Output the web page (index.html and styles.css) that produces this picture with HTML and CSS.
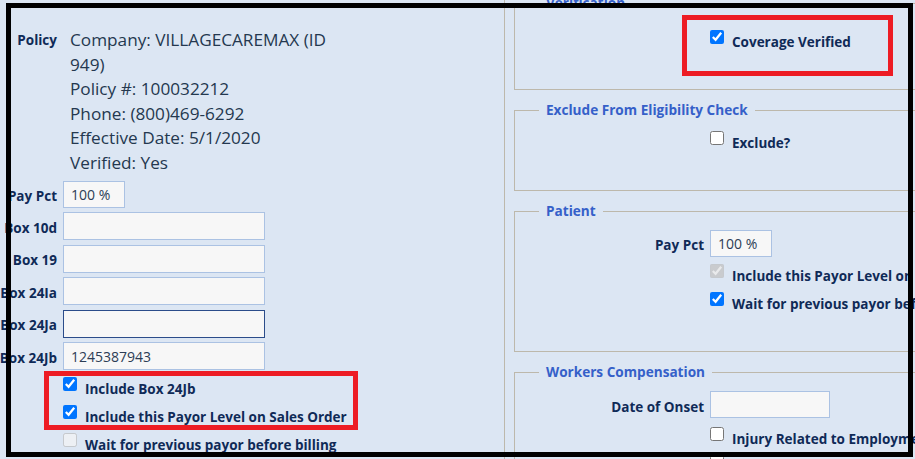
FILE: index.html
```html
<!DOCTYPE html>
<html>
<head>
<meta charset="utf-8">
<link rel="stylesheet" href="styles.css">
</head>
<body>
<div class="screen">
  <div class="left">
    <div class="form">
      <div class="lbl policy-lbl">Policy</div>
      <div class="policy">Company: VILLAGECAREMAX (ID<br>949)<br>Policy #: 100032212<br>Phone: (800)469-6292<br>Effective Date: 5/1/2020<br>Verified: Yes</div>

      <div class="lbl">Pay Pct</div>
      <input class="inp sm" type="text" value="100 %">
      <div class="lbl">Box 10d</div>
      <input class="inp" type="text" value="">
      <div class="lbl">Box 19</div>
      <input class="inp" type="text" value="">
      <div class="lbl">Box 24Ia</div>
      <input class="inp" type="text" value="">
      <div class="lbl">Box 24Ja</div>
      <input class="inp focus" type="text" value="">
      <div class="lbl">Box 24Jb</div>
      <input class="inp" type="text" value="1245387943">

      <label class="check"><input type="checkbox" checked><span>Include Box 24Jb</span></label>
      <label class="check"><input type="checkbox" checked><span>Include this Payor Level on Sales Order</span></label>
      <label class="check"><input type="checkbox" disabled><span>Wait for previous payor before billing</span></label>
    </div>
  </div>

  <div class="right">
    <fieldset class="fs first">
      <legend>Verification</legend>
      <div class="rgrid">
        <label class="check"><input type="checkbox" checked><span>Coverage Verified</span></label>
      </div>
    </fieldset>
    <fieldset class="fs">
      <legend>Exclude From Eligibility Check</legend>
      <div class="rgrid">
        <label class="check"><input type="checkbox"><span>Exclude?</span></label>
      </div>
    </fieldset>
    <fieldset class="fs">
      <legend>Patient</legend>
      <div class="rgrid">
        <div class="lbl">Pay Pct</div>
        <input class="inp sm" type="text" value="100 %">
        <label class="check"><input type="checkbox" checked disabled><span>Include this Payor Level on Sales Order</span></label>
        <label class="check"><input type="checkbox" checked><span>Wait for previous payor before billing</span></label>
      </div>
    </fieldset>
    <fieldset class="fs">
      <legend>Workers Compensation</legend>
      <div class="rgrid">
        <div class="lbl">Date of Onset</div>
        <input class="inp date" type="text" value="">
        <label class="check"><input type="checkbox"><span>Injury Related to Employment</span></label>
        <label class="check"><input type="checkbox"><span>Auto Accident</span></label>
      </div>
    </fieldset>
  </div>
</div>

<div class="mark mark-black"></div>
<div class="mark mark-red red-left"></div>
<div class="mark mark-red red-right"></div>
</body>
</html>
```
FILE: styles.css
```css
* { box-sizing: border-box; }
html, body { margin: 0; }
body {
  width: 915px;
  height: 459px;
  overflow: hidden;
  position: relative;
  background: #dce6f3;
  font-family: "Open Sans", sans-serif;
  color: #102a55;
}
.screen { display: flex; height: 100%; }

.left { flex: none; width: 504px; padding-top: 28px; }
.form {
  display: grid;
  grid-template-columns: 57px 202px;
  column-gap: 6px;
  align-items: center;
}
.lbl {
  display: flex;
  justify-content: flex-end;
  white-space: nowrap;
  padding-top: 8px;
  font-weight: 700;
  font-size: 13.5px;
  color: #0f2a57;
}
.policy-lbl { align-self: start; padding-top: 0; line-height: 24.6px; }
.policy {
  font-size: 17.2px;
  line-height: 24.6px;
  color: #24384f;
  padding-left: 7px;
  white-space: nowrap;
}
.inp {
  display: block;
  width: 202px;
  height: 28px;
  margin: 4.5px 0 0;
  padding: 0 7px;
  border: 1px solid #abc2e3;
  border-radius: 0;
  background: #f7f7f7;
  font: 14px "Open Sans", sans-serif;
  color: #2c3d55;
  outline: none;
}
.inp.sm { width: 62px; height: 27px; margin-top: 5px; }
.inp.date { width: 120px; height: 27px; margin: 5px 0 2px; }
.inp.focus { border-color: #2b4c8a; }

.check {
  grid-column: 2;
  display: flex;
  align-items: center;
  gap: 8px;
  height: 28px;
  white-space: nowrap;
  font-weight: 700;
  font-size: 13.5px;
  color: #0f2a57;
}
.check input { width: 14px; height: 14px; margin: 0; flex: none; }
.check span { padding-top: 10px; }

.right {
  flex: none;
  width: 440px;
  border-left: 1px solid #bdb8ab;
  padding-left: 9px;
}
.fs {
  margin: 10px 0 0;
  min-width: 0;
  border: 1px solid #bdb8ab;
  padding: 4px 0 38px 24px;
}
.fs.first { margin-top: -7px; padding-top: 10px; }
legend {
  padding: 0 7px;
  font-weight: 700;
  font-size: 13.6px;
  line-height: 20px;
  color: #3560c9;
}
.rgrid {
  display: grid;
  grid-template-columns: 165px auto;
  column-gap: 6px;
  align-items: center;
  justify-content: start;
}

.mark { position: absolute; pointer-events: none; }
.mark-black { left: 6px; top: 3px; width: 907px; height: 454px; border: 5px solid #000; }
.mark-red { border: 5px solid #ed1c24; }
.red-left { left: 44px; top: 371px; width: 314px; height: 59px; }
.red-right { left: 682px; top: 15px; width: 211px; height: 61px; }
```
